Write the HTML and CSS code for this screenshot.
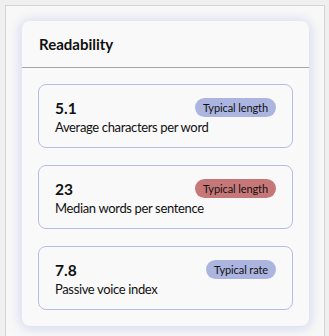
FILE: index.html
```html
<!DOCTYPE html>
<html lang="en">
<head>
<meta charset="utf-8">
<title>Readability</title>
<link rel="stylesheet" href="styles.css">
</head>
<body>
<div class="panel">
  <section class="card">
    <header class="card-header">
      <h2 class="card-title">Readability</h2>
    </header>
    <div class="card-body">
      <div class="metric">
        <div class="metric-top">
          <span class="metric-value">5.1</span>
          <span class="badge badge-blue">Typical length</span>
        </div>
        <div class="metric-label">Average characters per word</div>
      </div>
      <div class="metric">
        <div class="metric-top">
          <span class="metric-value">23</span>
          <span class="badge badge-red">Typical length</span>
        </div>
        <div class="metric-label">Median words per sentence</div>
      </div>
      <div class="metric">
        <div class="metric-top">
          <span class="metric-value">7.8</span>
          <span class="badge badge-blue">Typical rate</span>
        </div>
        <div class="metric-label">Passive voice index</div>
      </div>
    </div>
  </section>
</div>
</body>
</html>
```
FILE: styles.css
```css
html, body {
  margin: 0;
  padding: 0;
}
body {
  background: #efefef;
  font-family: "Lato", "Noto Sans", sans-serif;
  color: #111;
  height: 336px;
  overflow: hidden;
  padding-top: 5px;
  box-sizing: border-box;
}
.panel {
  margin-left: 5px;
  width: 320px;
  height: 331px;
  box-sizing: border-box;
  border: 1px solid #d4d4d4;
  border-bottom: none;
  background: #f8f8f8;
  padding: 15px 15px 0 16px;
}
.card {
  background: #f9f9f9;
  border-radius: 8px;
  box-shadow: 0 1px 12px 2px rgba(120, 135, 220, 0.28);
}
.card-header {
  height: 46px;
  border-bottom: 1px solid #a6a6a6;
  display: flex;
  align-items: center;
  padding: 0 17px;
}
.card-title {
  margin: 0;
  font-size: 15px;
  font-weight: 700;
}
.card-body {
  padding: 16px 16px 16px;
  display: flex;
  flex-direction: column;
  gap: 17px;
}
.metric {
  border: 1px solid #b4bde9;
  border-radius: 8px;
  padding: 13px 16px 12px;
}
.metric-top {
  display: flex;
  justify-content: space-between;
  align-items: center;
}
.metric-value {
  font-size: 15.5px;
  font-weight: 700;
}
.metric-label {
  font-size: 13px;
  letter-spacing: -0.35px;
  margin-top: 2px;
}
.badge {
  font-size: 11px;
  letter-spacing: -0.1px;
  padding: 2px 8px;
  border-radius: 10px;
  line-height: 15px;
}
.badge-blue {
  background: #abb5e0;
}
.badge-red {
  background: #c67878;
}
```
